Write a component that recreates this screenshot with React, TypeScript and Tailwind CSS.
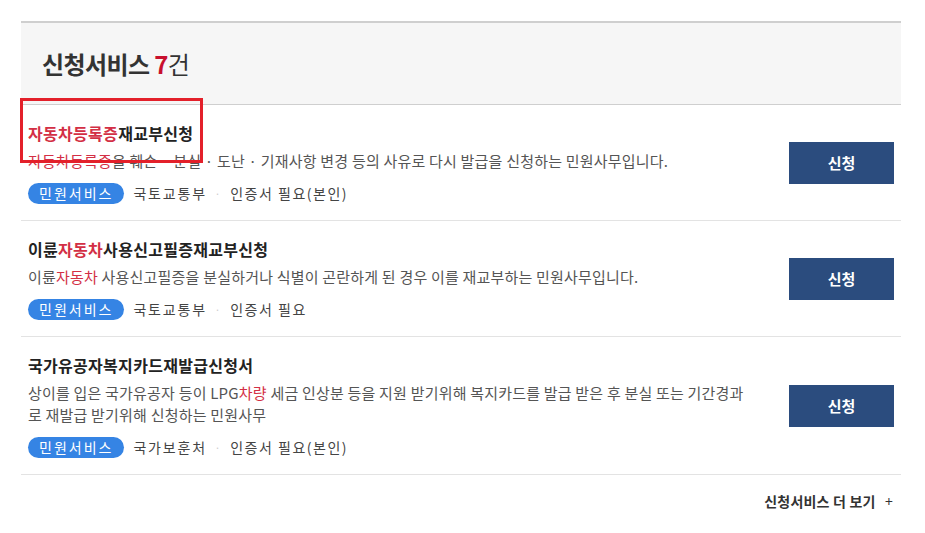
const ITEMS = [
  {
    title: [
      { t: "자동차등록증", red: true },
      { t: "재교부신청" },
    ],
    desc: [
      { t: "자동차등록증", red: true },
      { t: "을 훼손 · 분실 · 도난 · 기재사항 변경 등의 사유로 다시 발급을 신청하는 민원사무입니다." },
    ],
    org: "국토교통부",
    cert: "인증서 필요(본인)",
  },
  {
    title: [{ t: "이륜" }, { t: "자동차", red: true }, { t: "사용신고필증재교부신청" }],
    desc: [
      { t: "이륜" },
      { t: "자동차", red: true },
      { t: " 사용신고필증을 분실하거나 식별이 곤란하게 된 경우 이를 재교부하는 민원사무입니다." },
    ],
    org: "국토교통부",
    cert: "인증서 필요",
  },
  {
    title: [{ t: "국가유공자복지카드재발급신청서" }],
    desc: [
      { t: "상이를 입은 국가유공자 등이 LPG" },
      { t: "차량", red: true },
      { t: " 세금 인상분 등을 지원 받기위해 복지카드를 발급 받은 후 분실 또는 기간경과로 재발급 받기위해 신청하는 민원사무" },
    ],
    org: "국가보훈처",
    cert: "인증서 필요(본인)",
  },
];

type Part = { t: string; red?: boolean };

function Parts({ parts }: { parts: Part[] }) {
  return (
    <>
      {parts.map((p, i) => (
        <span key={i} className={p.red ? "text-[#d32f45]" : undefined}>
          {p.t}
        </span>
      ))}
    </>
  );
}

export default function App() {
  return (
    <div
      className="relative min-h-[533px] w-[925px] bg-white pt-[21px] pl-[21px]"
      style={{ fontFamily: '"Noto Sans CJK KR", "Noto Sans", sans-serif' }}
    >
      <div className="w-[880px]">
        <div className="flex h-[84px] items-center border-t-2 border-b border-[#cfcfcf] bg-[#f6f6f6] pl-[21px]">
          <h2 className="text-[24px] font-bold tracking-[-0.6px] text-[#333]">
            신청서비스 <span className="text-[#c8102e]">7</span>
            <span className="font-normal">건</span>
          </h2>
        </div>

        <ul>
          {ITEMS.map((item, i) => (
            <li
              key={i}
              className="flex items-center justify-between border-b border-[#e3e3e3] pt-4 pb-[15px] pl-[7px] pr-[7px]"
            >
              <div className="w-[720px]">
                <p className="text-[16px] leading-[24px] font-bold tracking-[0.3px] text-[#222]">
                  <Parts parts={item.title} />
                </p>
                <p className="mt-[5px] break-all text-[15px] leading-[22px] tracking-[0.2px] text-[#555]">
                  <Parts parts={item.desc} />
                </p>
                <div className="mt-[9px] flex h-[24px] items-center text-[14px] tracking-[1.8px] text-[#444]">
                  <span className="flex h-[21px] items-center rounded-full bg-[#3584e4] px-[11px] tracking-[2px] text-white">
                    민원서비스
                  </span>
                  <span className="ml-[9px]">{item.org}</span>
                  <span className="mx-[8px] text-[10px] text-[#ccc]">·</span>
                  <span className="tracking-[1.5px]">{item.cert}</span>
                </div>
              </div>
              <button className="h-[42px] w-[105px] bg-[#2b4c7e] text-[15px] font-bold text-white">
                신청
              </button>
            </li>
          ))}
        </ul>

        <div className="flex justify-end pt-[16px] pr-[8px]">
          <span className="text-[14px] font-bold tracking-[0.2px] text-[#333]">
            신청서비스 더 보기 <span className="ml-[6px] font-normal">+</span>
          </span>
        </div>
      </div>

      <div className="absolute left-[20px] top-[98px] h-[65px] w-[183px] border-[3px] border-[#e3202a]" />
    </div>
  );
}
